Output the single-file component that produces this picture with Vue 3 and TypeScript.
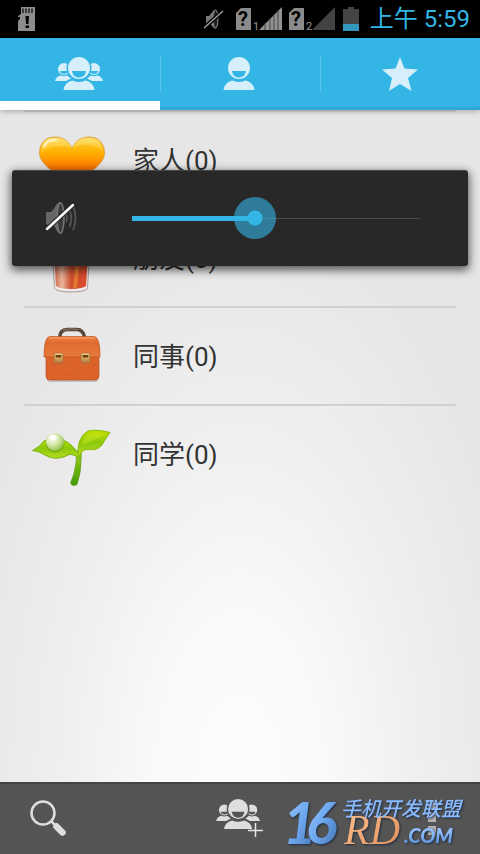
<script setup lang="ts">
import { computed, ref } from 'vue'

interface Group {
  id: string
  name: string
  count: number
}

const groups: Group[] = [
  { id: 'family', name: '家人', count: 0 },
  { id: 'friends', name: '朋友', count: 0 },
  { id: 'work', name: '同事', count: 0 },
  { id: 'school', name: '同学', count: 0 },
]

const tabs = [
  { id: 'groups', label: '群组' },
  { id: 'people', label: '联系人' },
  { id: 'starred', label: '收藏' },
]

const activeTab = ref('groups')
const volume = ref(427)
const fill = computed(() => ({ '--level': String(volume.value / 1000) }))
</script>

<template>
  <div class="screen">
    <svg class="defs" aria-hidden="true">
      <symbol id="person" viewBox="0 1 34 34">
        <circle cx="16" cy="12" r="11" />
        <path class="cut" d="M9 15H23Q22 21.500 16 21.500Q10 21.500 9 15Z" />
        <path d="M.5 34Q1.500 26.500 9.500 24.500Q16 27.500 22.500 24.500Q30.500 26.500 31.500 34Z" />
      </symbol>
      <symbol id="people" viewBox="0 1 50 34">
        <circle cx="9" cy="13" r="6" />
        <path class="cut" d="M5 15H13Q12.500 18 9 18Q5.500 18 5 15Z" />
        <path d="M0 25Q1 20.500 5.500 19.500Q9 21 12 19.500L16 22.500L11 25Z" />
        <circle cx="39" cy="13" r="6" />
        <path class="cut" d="M35 15H43Q42.500 18 39 18Q35.500 18 35 15Z" />
        <path d="M48 25Q47 20.500 42.500 19.500Q39 21 36 19.500L32 22.500L37 25Z" />
        <circle class="cut" cx="24" cy="12" r="12.500" />
        <circle cx="24" cy="12" r="11" />
        <path class="cut" d="M17 15H31Q30 21.500 24 21.500Q18 21.500 17 15Z" />
        <path d="M8.500 34Q9.500 26.500 17.500 24.500Q24 27.500 30.500 24.500Q38.500 26.500 39.500 34Z" />
      </symbol>
    </svg>

    <header class="status">
      <svg class="sd" width="18" height="24" viewBox="0 0 18 24" aria-hidden="true">
        <path d="M3 0H17V24H0V14L2 12V10H0V9L3 7Z" fill="#8d8d8d" />
        <path d="M5 1.500V6M8 1.500V6M11 1.500V6M14 1.500V6" stroke="#111" stroke-width="1.300" />
        <path d="M7.500 9H11L10.500 17H8ZM7.500 18.500H11V21H7.500Z" fill="#000" />
      </svg>
      <svg width="20" height="24" viewBox="0 0 20 24" aria-hidden="true">
        <path d="M2 9H5L10 3Q14 1 14 12Q14 24 10 21L5 16H2Z" fill="#777" />
        <ellipse cx="11.500" cy="12" rx="2.500" ry="9" fill="#222" stroke="#888" />
        <path d="M0 21L19 4" stroke="#000" stroke-width="4" />
        <path d="M0 21L19 4" stroke="#999" stroke-width="1.500" />
      </svg>
      <svg v-for="sim in 2" :key="sim" class="sim" width="46" height="30" viewBox="0 -3 46 30" aria-hidden="true">
        <path d="M5 1H15V23H0V6Z" fill="#8b8b8b" />
        <text x="2" y="19" font-size="20" font-weight="700" fill="#000">?</text>
        <text x="17" y="23" font-size="11" fill="#999">{{ sim }}</text>
        <path d="M46 0V23H23Z" :fill="sim === 1 ? '#929292' : '#424242'" />
        <path v-if="sim === 1" d="M29 16V23M34 11V23M38 7V23M42 3V23" stroke="#444" />
      </svg>
      <svg class="battery" width="16" height="24" viewBox="0 0 16 24" aria-hidden="true">
        <path d="M5 0H11V2H16V24H0V2H5Z" fill="#444" />
        <path d="M0 17H16V24H0Z" fill="#3397bf" />
      </svg>
      <time class="clock">上午 5:59</time>
    </header>

    <nav class="tabs">
      <button
        v-for="tab in tabs"
        :key="tab.id"
        type="button"
        class="tab"
        :class="{ active: tab.id === activeTab }"
        :aria-label="tab.label"
        @click="activeTab = tab.id"
      >
        <svg v-if="tab.id === 'groups'" width="50" height="34"><use href="#people" /></svg>
        <svg v-else-if="tab.id === 'people'" width="34" height="34"><use href="#person" /></svg>
        <svg v-else width="36" height="34" viewBox="0 0 36 34">
          <path d="M18 0L22.500 11.500L36 12.500L26 21L29.500 34L18 27L7 34L10 21L0 12.500L13.500 11.500Z" />
        </svg>
      </button>
    </nav>

    <main class="content">
      <ul class="list">
        <li v-for="group in groups" :key="group.id">
          <a class="row" :href="'#' + group.id">
            <svg class="picture" width="96" height="96" viewBox="0 0 96 96" aria-hidden="true">
              <defs>
                <linearGradient id="heart" x2="0" y2="1">
                  <stop offset="0" stop-color="#ffd23c" />
                  <stop offset=".3" stop-color="#ffb000" />
                  <stop offset=".65" stop-color="#ff6c00" />
                  <stop offset="1" stop-color="#e64a00" />
                </linearGradient>
                <linearGradient id="shine" x2="0" y2="1">
                  <stop offset="0" stop-color="#fff3a8" stop-opacity=".5" />
                  <stop offset="1" stop-color="#ffd84a" stop-opacity=".3" />
                </linearGradient>
                <linearGradient id="cola">
                  <stop offset="0" stop-color="#c9583c" />
                  <stop offset=".25" stop-color="#e9b49c" />
                  <stop offset=".5" stop-color="#cf4f31" />
                  <stop offset="1" stop-color="#dd4a2b" />
                </linearGradient>
                <linearGradient id="leather" x2="0" y2="1">
                  <stop offset="0" stop-color="#ee8648" />
                  <stop offset=".3" stop-color="#e06a2f" />
                  <stop offset="1" stop-color="#e77a3e" />
                </linearGradient>
                <linearGradient id="brass" x2="0" y2="1">
                  <stop offset="0" stop-color="#f3cf8b" />
                  <stop offset="1" stop-color="#b67a3d" />
                </linearGradient>
                <linearGradient id="leaf" x2="0" y2="1">
                  <stop offset="0" stop-color="#c3e000" />
                  <stop offset=".5" stop-color="#8cc80c" />
                  <stop offset="1" stop-color="#b4dc20" />
                </linearGradient>
                <linearGradient id="stem" x2="0" y2="1">
                  <stop offset="0" stop-color="#a2d512" />
                  <stop offset="1" stop-color="#3f9b08" />
                </linearGradient>
                <radialGradient id="drop" cx=".35" cy=".3" r=".75">
                  <stop offset="0" stop-color="#fff" />
                  <stop offset=".5" stop-color="#d4e8a8" />
                  <stop offset="1" stop-color="#8fbf45" />
                </radialGradient>
              </defs>
              <g v-if="group.id === 'family'">
                <path d="M48 36C44 28 38 25 31 25C21 25 15.500 32 15.500 41C15.500 48 21 53 28 59C36 67 44 71 48 77C52 71 60 67 68 59C75 53 80.500 48 80.500 41C80.500 32 75 25 65 25C58 25 52 28 48 36Z" fill="url(#heart)" stroke="#d69a35" stroke-width=".8" />
                <path d="M48 36C44 28 38 26 31 26C22 26 17 32 17 41Q24 34 35 34Q43 34 48 36Q57 31 66 33Q75 34 79 40C79 31 74 26 65 26C58 26 52 28 48 36Z" fill="url(#shine)" />
                <path d="M20 34Q24 27 32 28" fill="none" stroke="#fff8d0" stroke-width="3" stroke-linecap="round" opacity=".7" />
              </g>
              <g v-else-if="group.id === 'friends'">
                <path d="M27 22H67L63.500 78Q62 82 47 82Q32 82 30.500 78Z" fill="#eadedb" stroke="#a99d9a" />
                <path d="M29 28H65L62 76Q58 79 47 79Q36 79 32 76Z" fill="url(#cola)" />
                <path d="M54 30H58L53 78H49Z" fill="#e17a2d" />
                <path d="M31 77Q34 80 47 80Q60 80 63 77" fill="none" stroke="#f5eeee" stroke-width="1.500" />
              </g>
              <g v-else-if="group.id === 'work'">
                <rect x="23" y="70" width="51" height="4" rx="2" fill="#9b9b9b" opacity=".5" />
                <path d="M35.500 30Q36 21.500 43 21.500H53Q59 21.500 61 30" fill="none" stroke="#57463b" stroke-width="3.500" />
                <path d="M39 22.500Q46 19.500 54 21.500" fill="none" stroke="#8b7b70" />
                <rect x="22" y="34" width="53" height="38" rx="4" fill="#dc642b" stroke="#b94e20" stroke-width=".7" />
                <path d="M27 56L32 58M42 54L49 57M51 62L57 59M33 64L38 68M60 66L65 62M69 58L72 55M44 66L51 69M26 65L29 62" stroke="#bd4e22" stroke-linecap="round" opacity=".4" />
                <path d="M26 28.500H70Q76 28.500 76 49H20Q20 28.500 26 28.500Z" fill="url(#leather)" stroke="#bd5423" stroke-width=".7" />
                <path d="M25 30H71" stroke="#ffa56a" opacity=".8" />
                <g v-for="x in [30, 57]" :key="x">
                  <rect :x="x" y="45" width="9" height="10" rx="2" fill="url(#brass)" stroke="#9c6633" stroke-width=".6" />
                  <rect :x="x + 1.500" y="47" width="6" height="2.500" rx="1" fill="#68400e" />
                </g>
              </g>
              <g v-else>
                <path d="M52 46Q53 54 51.500 60Q50.500 68 46.500 77Q48 81 53 78.500Q57 67 57 55Q57 47 58 42Z" fill="url(#stem)" stroke="#5b9b13" stroke-width=".7" />
                <path d="M8.500 44.500Q16 41 20 35Q28 30 39 34Q47 37 55 48V52Q47 46 42 50Q31 55 21 49Q15 45 8.500 44.500Z" fill="url(#leaf)" stroke="#75b408" />
                <path d="M54 49Q53 31 64 25Q73 23 86 26.500Q82 32 78 39Q73 45 65 43.500Q58 43 56 49Z" fill="url(#leaf)" stroke="#8abc09" />
                <path d="M57 39Q61 28 70 27Q76 27 81 28Q71 35 57 39Z" fill="#d7eb28" opacity=".4" />
                <circle cx="31" cy="37" r="9.500" fill="#4f9404" opacity=".5" />
                <circle cx="31" cy="36" r="9" fill="url(#drop)" />
                <ellipse cx="29" cy="31.500" rx="3.500" ry="2.500" fill="#fff" />
              </g>
            </svg>
            <span class="name">{{ group.name }}({{ group.count }})</span>
          </a>
        </li>
      </ul>
    </main>

    <footer class="actions">
      <button class="search" type="button" aria-label="搜索">
        <svg width="38" height="38" viewBox="0 0 38 38" fill="none" stroke="#dedede">
          <circle cx="14" cy="14" r="11.500" stroke-width="2.500" />
          <path d="M22 22L26 26" stroke-width="2.500" />
          <path d="M27.500 27.500L33.500 33.500" stroke-width="6.500" stroke-linecap="round" />
        </svg>
      </button>
      <button type="button" aria-label="新建群组">
        <svg width="48" height="38" viewBox="0 0 48 38">
          <use href="#people" width="46" height="31" />
          <path d="M39.500 24V38M32 31.500H47" stroke="#e4e4e4" stroke-width="1.500" />
        </svg>
      </button>
      <button class="more" type="button" aria-label="更多">
        <svg width="8" height="34" viewBox="0 0 8 34" fill="#b2b2b2">
          <path d="M0 0H8V8H0ZM0 12H8V21H0ZM0 25H8V34H0Z" />
        </svg>
      </button>
      <svg class="brand" width="190" height="70" viewBox="-6 -10 190 70">
        <defs>
          <linearGradient id="blue" x2="1" y2="1">
            <stop offset="0" stop-color="#a8cdff" />
            <stop offset=".5" stop-color="#6fa9f0" />
            <stop offset="1" stop-color="#3c6cab" />
          </linearGradient>
          <linearGradient id="sky" x2="0" y2="1">
            <stop offset=".4" stop-color="#8fbdfb" />
            <stop offset="1" stop-color="#4d83cd" />
          </linearGradient>
          <linearGradient id="copper" x2="1" y2="1">
            <stop offset="0" stop-color="#ffc493" />
            <stop offset="1" stop-color="#dc8a55" />
          </linearGradient>
        </defs>
        <g class="digits"><text x="-1" y="50">1</text><text x="22" y="50">6</text></g>
        <text class="initials" x="60" y="50">RD</text>
        <text class="union" x="57" y="22">手机开发联盟</text>
        <text class="domain" x="120" y="49">.COM</text>
      </svg>
    </footer>

    <section class="volume" aria-label="音量">
      <svg width="32" height="34" viewBox="0 0 32 34" aria-hidden="true">
        <path d="M1 11H6Q9 9 11 4Q13 1 16 1V33Q12 32 10 26Q8 24 6 24H3Q1 24 1 21Z" fill="#666" />
        <ellipse cx="15.500" cy="17" rx="3.500" ry="15" fill="#3a3a3a" stroke="#777" stroke-width="1.500" />
        <path d="M21 13Q23 17 21 21M24.500 9Q28 17 24.500 26M28 5Q33 17 28 29" fill="none" stroke="#555" stroke-width="1.800" />
        <path d="M2 28L28 4" stroke="#282828" stroke-width="5" />
        <path d="M2 28L28 4" stroke="#fff" stroke-width="2.500" stroke-linecap="round" />
      </svg>
      <input v-model.number="volume" class="slider" :style="fill" type="range" min="0" max="1000" aria-label="铃声音量" />
    </section>
  </div>
</template>

<style>
body {
  margin: 0;
}
</style>

<style scoped>
.screen {
  position: relative;
  display: flex;
  flex-direction: column;
  min-height: 100vh;
  font-family: Roboto, "Noto Sans CJK SC", sans-serif;
  background: #e5e5e5;
}

.defs {
  position: absolute;
  width: 0;
  height: 0;
}

.cut {
  fill: var(--surface);
}

button {
  padding: 0;
  border: 0;
  background: none;
  cursor: pointer;
}

.status {
  display: flex;
  align-items: center;
  height: 38px;
  padding: 0 10px 0 18px;
  background: #000;
}

.sd {
  margin-right: auto;
}

.sim {
  margin-left: 7px;
}

.sim:nth-of-type(3) {
  margin-left: 12px;
}

.battery {
  margin: 0 11px 0 8px;
}

.clock {
  font-size: 24px;
  line-height: 38px;
  color: #33b5e5;
}

.tabs {
  --surface: #33b5e5;
  position: relative;
  z-index: 1;
  display: grid;
  grid-template-columns: repeat(3, 1fr);
  height: 72px;
  background: var(--surface);
  box-shadow: 0 1px 6px rgba(0, 0, 0, 0.3);
}

.tab {
  position: relative;
  display: flex;
  align-items: center;
  justify-content: center;
  box-sizing: border-box;
  padding-top: 3px;
  border-bottom: 3px solid #2fa8d5;
  fill: #d6effa;
}

.tab.active {
  padding-top: 9px;
  border-bottom: 9px solid #fff;
}

.tab + .tab::before {
  content: "";
  position: absolute;
  left: 0;
  top: 18px;
  width: 1px;
  height: 36px;
  background: #5cc4ea;
}

.content {
  flex: 1;
  background: radial-gradient(ellipse 290px 580px at 50% 100%, #fdfdfd 0%, #f9f9f9 30%, #efefef 62%, #e6e6e6 100%);
}

.list {
  margin: 0;
  padding: 0 24px;
  list-style: none;
}

.row {
  display: flex;
  align-items: center;
  gap: 13px;
  border-top: 2px solid #d0d0d0;
  color: #333;
  text-decoration: none;
}

.picture {
  display: block;
}

.name {
  padding-top: 2px;
  font-size: 26px;
  line-height: 36px;
}

.actions {
  --surface: #545454;
  position: relative;
  display: grid;
  grid-template-columns: 1fr auto 1fr;
  align-items: center;
  box-sizing: border-box;
  height: 72px;
  padding: 0 29px 2px;
  border-top: 2px solid #444;
  background: var(--surface);
}

.actions button {
  display: flex;
  fill: #dedede;
}

.actions .search {
  justify-self: start;
}

.actions .more {
  justify-self: end;
  padding-right: 15px;
}

.brand {
  position: absolute;
  right: 12px;
  bottom: 0;
  overflow: visible;
  pointer-events: none;
  filter: drop-shadow(1px 1px 1px #1d2b3d);
}

.digits {
  font: italic 900 58px Lato, sans-serif;
  fill: url(#blue);
}

.initials {
  font: italic 400 42px "Liberation Serif", serif;
  fill: url(#copper);
}

.union {
  font: italic 500 20px "Noto Sans CJK SC", sans-serif;
  fill: #8abaff;
}

.domain {
  font: italic 900 20px Lato, sans-serif;
  fill: url(#sky);
}

.volume {
  position: absolute;
  z-index: 2;
  top: 170px;
  left: 12px;
  right: 12px;
  display: flex;
  align-items: center;
  gap: 34px;
  box-sizing: border-box;
  height: 96px;
  padding: 0 27px 1px 33px;
  border-top: 1px solid #484848;
  border-radius: 3px;
  background: #282828;
  box-shadow: 0 3px 10px 1px rgba(0, 0, 0, 0.65);
}

.slider {
  flex: 1;
  min-width: 0;
  height: 42px;
  margin: 0;
  appearance: none;
  background:
    linear-gradient(#33b5e5, #33b5e5) 21px 50% / calc((100% - 42px) * var(--level)) 5px no-repeat,
    linear-gradient(#4c4c4c, #4c4c4c) 50% 50% / calc(100% - 42px) 1px no-repeat;
  cursor: pointer;
}

.slider::-webkit-slider-thumb {
  width: 42px;
  height: 42px;
  appearance: none;
  border-radius: 50%;
  background: radial-gradient(circle, #33b5e5 7px, rgba(51, 181, 229, 0.6) 8px);
}
</style>
